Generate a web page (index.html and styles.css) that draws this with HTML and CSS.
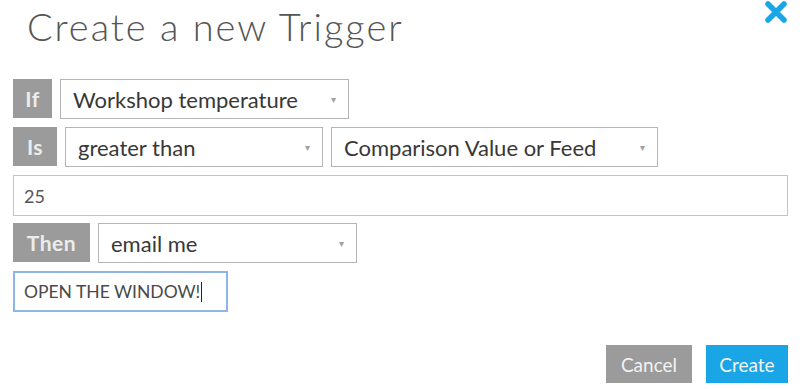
FILE: index.html
```html
<!DOCTYPE html>
<html lang="en">
<head>
    <meta charset="UTF-8">
    <title>Create a new Trigger</title>
    <link rel="stylesheet" href="styles.css">
</head>
<body>
    <div class="modal">
        <div class="modal-head">
            <h1>Create a new Trigger</h1>
            <span class="close">
                <svg width="24" height="22" viewBox="0 0 24 22">
                    <path d="M4 3 L20 19 M20 3 L4 19" stroke="#1aa6e6" stroke-width="5.5" stroke-linecap="round"/>
                </svg>
            </span>
        </div>

        <div class="row">
            <span class="tag tag-if">If</span>
            <div class="select sel-feed">Workshop temperature<span class="caret">&#9662;</span></div>
        </div>

        <div class="row">
            <span class="tag tag-is">Is</span>
            <div class="select sel-op">greater than<span class="caret">&#9662;</span></div>
            <div class="select sel-cmp">Comparison Value or Feed<span class="caret">&#9662;</span></div>
        </div>

        <div class="row">
            <div class="input input-wide">25</div>
        </div>

        <div class="row">
            <span class="tag tag-then">Then</span>
            <div class="select sel-action">email me<span class="caret">&#9662;</span></div>
        </div>

        <div class="row">
            <div class="input input-focus">OPEN THE WINDOW!<span class="cursor"></span></div>
        </div>

        <div class="actions">
            <button class="btn btn-cancel">Cancel</button>
            <button class="btn btn-create">Create</button>
        </div>
    </div>
</body>
</html>
```

FILE: styles.css
```css
body {
    margin: 0;
    background: #fff;
    font-family: Lato, "Open Sans", sans-serif;
    color: #333;
}
.modal {
    width: 800px;
    height: 389px;
    padding: 0 12px 0 13px;
    box-sizing: border-box;
    position: relative;
}
.modal-head {
    display: flex;
    justify-content: space-between;
    align-items: flex-start;
    height: 79px;
}
h1 {
    margin: 0;
    padding: 3px 0 0 14px;
    font-size: 38px;
    font-weight: 300;
    color: #555;
    letter-spacing: 2px;
    line-height: 46px;
}
.close {
    margin-top: 1px;
    margin-right: 0;
}
.row {
    display: flex;
    gap: 8px;
    margin-bottom: 8px;
    height: 40px;
}
.tag {
    background: #9b9b9b;
    color: #ececec;
    font-size: 21px;
    font-weight: 700;
    letter-spacing: 0.5px;
    display: flex;
    align-items: center;
    justify-content: center;
    box-sizing: border-box;
    height: 39px;
}
.tag-if { width: 39px; }
.tag-is { width: 44px; }
.tag-then { width: 77px; }
.select {
    border: 1px solid #b5b5b5;
    box-sizing: border-box;
    height: 40px;
    padding: 0 12px;
    font-size: 22px;
    color: #383838;
    display: flex;
    align-items: center;
    justify-content: space-between;
}
.caret {
    color: #a0a0a0;
    font-size: 10px;
}
.sel-feed { width: 289px; }
.sel-op { width: 258px; }
.sel-cmp { width: 327px; }
.sel-action { width: 259px; }
.input {
    border: 1px solid #c4c4c4;
    box-sizing: border-box;
    height: 41px;
    padding: 0 10px;
    font-size: 18px;
    color: #555;
    display: flex;
    align-items: center;
}
.input-wide { width: 783px; }
.input-focus {
    width: 215px;
    border: 2px solid #8fb5e8;
    padding-left: 9px;
    font-size: 17.5px;
    color: #4a4a4a;
}
.cursor {
    display: inline-block;
    width: 1px;
    height: 20px;
    background: #222;
    margin-left: 1px;
}
.actions {
    position: absolute;
    right: 12px;
    bottom: 6px;
    display: flex;
    gap: 14px;
}
.btn {
    border: none;
    height: 38px;
    font-family: Lato, "Open Sans", sans-serif;
    font-size: 19px;
    color: #f2f2f2;
    padding: 0;
}
.btn-cancel {
    background: #9b9b9b;
    width: 86px;
}
.btn-create {
    background: #1aa6e6;
    width: 82px;
}
```
